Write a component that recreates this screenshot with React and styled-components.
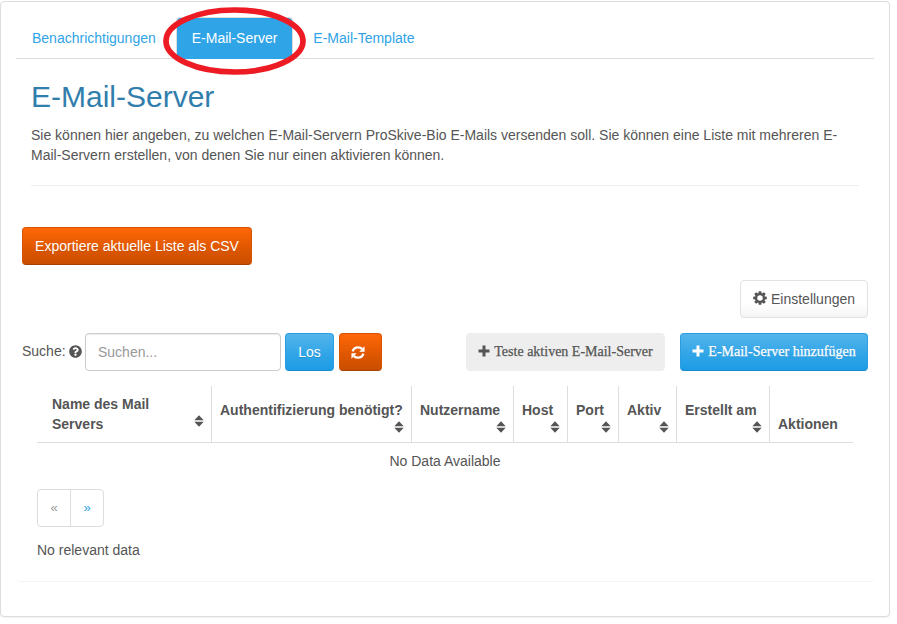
import React from "react";
import styled, { createGlobalStyle, css } from "styled-components";
import { FaQuestionCircle } from "react-icons/fa";

const GlobalStyle = createGlobalStyle`
  * { box-sizing: border-box; }
  body {
    margin: 0;
    background: #fff;
    color: #555;
    font: 14px/20px "Liberation Sans", Arial, sans-serif;
  }
  button, input { font: inherit; }
`;

const Page = styled.main`
  width: 890px;
  height: 616px;
  margin: 1px 0 6px;
  padding: 15px;
  border: 1px solid #ddd;
  border-radius: 4px;
  background: #fff;
  box-shadow: 0 1px 1px rgba(0, 0, 0, 0.05);
`;

const Tabs = styled.nav`
  display: flex;
  align-items: flex-end;
  gap: 2px;
  width: 858px;
  height: 42px;
  border-bottom: 1px solid #ddd;
`;

const Tab = styled.a`
  position: relative;
  height: 42px;
  margin-bottom: -1px;
  padding: 10px 15px;
  border: 1px solid transparent;
  border-radius: 4px 4px 0 0;
  color: #2fa4e7;
  white-space: nowrap;
  ${(p) => p.$active && css`
    margin-left: 2px;
    margin-right: 2px;
    border-color: #ddd #ddd transparent;
    background: #2fa4e7;
    background-clip: padding-box;
    color: #fff;
    border-bottom: 0;
  `}
`;

const Highlight = styled.svg`
  position: absolute;
  left: -15px;
  top: -12px;
  width: 144px;
  height: 70px;
  pointer-events: none;
`;

const Intro = styled.section`
  height: 127px;
  margin: 0 15px;
  border-bottom: 1px solid #eee;
`;

const Title = styled.h1`
  margin: 0;
  padding-top: 20px;
  color: #317eac;
  font-size: 30px;
  line-height: 35px;
  font-weight: 400;
`;

const Description = styled.p`
  margin: 11px 0 0;
`;

const ListPanel = styled.section`
  display: flex;
  flex-direction: column;
  height: 396px;
  width: 858px;
  padding: 41px 6px 0;
  border-bottom: 1px solid #f3f3f3;
  border-radius: 4px;
`;

const buttonKinds = {
  orange: css`
    background: linear-gradient(#ff6707, #dd5600 60%, #c94e00);
    border-color: #d65300;
    border-bottom-color: #a84100;
    color: #fff;
    text-shadow: 0 1px 0 rgba(0, 0, 0, 0.1);
  `,
  blue: css`
    background: linear-gradient(#54b4eb, #2fa4e7 60%, #1d9ce5);
    border-color: #2b9ee2;
    border-bottom-color: #178acc;
    color: #fff;
    text-shadow: 0 1px 0 rgba(0, 0, 0, 0.15);
  `,
  light: css`
    background: linear-gradient(#fff, #fff 60%, #f5f5f5);
    border-color: #e2e2e2;
    color: #555;
  `,
  gray: css`
    background: #eee;
    border-color: #eee;
    color: #555;
  `,
};

const Button = styled.button`
  display: inline-flex;
  align-items: center;
  justify-content: center;
  gap: 4px;
  flex: none;
  width: ${(p) => p.$width}px;
  height: 38px;
  padding: 0;
  border: 1px solid;
  border-radius: 4px;
  white-space: nowrap;
  ${(p) => buttonKinds[p.$kind]}
  ${(p) => p.$serif && css`
    font-family: "Liberation Serif", "Times New Roman", serif;
    -webkit-text-stroke: 0.25px currentColor;
  `}
`;

const RefreshButton = styled(Button)`
  justify-content: flex-start;
  padding-left: 11px;
`;

const SettingsRow = styled.div`
  display: flex;
  justify-content: flex-end;
  margin-top: 15px;
`;

const SearchRow = styled.div`
  display: flex;
  align-items: center;
  margin-top: 15px;
`;

const SearchLabel = styled.label`
  display: flex;
  align-items: center;
  justify-content: space-between;
  width: 60px;
  margin-right: 3px;
  padding-bottom: 2px;
`;

const SearchInput = styled.input`
  width: 196px;
  height: 38px;
  margin-right: 4px;
  padding: 8px 12px;
  border: 1px solid #ccc;
  border-radius: 4px;
  background: #fff;
  box-shadow: inset 0 1px 1px rgba(0, 0, 0, 0.075);
  outline: none;
  &::placeholder { color: #999; opacity: 1; }
`;

const SearchActions = styled.div`
  display: flex;
  gap: 5px;
`;

const ServerActions = styled.div`
  display: flex;
  gap: 15px;
  margin-left: auto;
`;

const Table = styled.table`
  width: 816px;
  margin: 15px 0 0 15px;
  border-collapse: separate;
  border-spacing: 0;
  table-layout: fixed;
`;

const HeaderCell = styled.th`
  height: 57px;
  width: ${(p) => p.$width}px;
  padding: ${(p) => (p.$first ? "8px 7px 8px 15px" : "14px 7px 7px 8px")};
  ${(p) => p.$last && css`padding-bottom: 8px;`}
  border-bottom: 1px solid #ddd;
  border-right: ${(p) => (p.$last ? 0 : 1)}px solid #ddd;
  text-align: left;
  vertical-align: ${(p) => (p.$last ? "bottom" : "top")};
  white-space: nowrap;
`;

const HeaderContent = styled.div`
  display: flex;
  flex-direction: ${(p) => (p.$first ? "row" : "column")};
  justify-content: space-between;
  align-items: flex-end;
`;

const HeaderText = styled.span`
  align-self: flex-start;
  width: ${(p) => (p.$wrap ? "110px" : "auto")};
  white-space: ${(p) => (p.$wrap ? "normal" : "nowrap")};
`;

const SortIcon = styled.svg`
  width: 10px;
  height: 12px;
  margin-top: 1px;
  margin-bottom: ${(p) => (p.$first ? 7 : 0)}px;
`;

const EmptyCell = styled.td`
  padding: 8px;
  text-align: center;
`;

const Pager = styled.nav`
  display: flex;
  width: 67px;
  height: 38px;
  margin: 10px 0 0 15px;
  border: 1px solid #ddd;
  border-radius: 4px;
`;

const PagerItem = styled.a`
  flex: 1;
  padding-top: 8px;
  font-size: 13px;
  text-align: center;
  color: ${(p) => (p.$disabled ? "#999" : "#2fa4e7")};
  & + & { border-left: 1px solid #ddd; }
`;

const Status = styled.p`
  margin: 13px 0 0 15px;
`;

const NudgedIcon = styled.svg`
  flex: none;
  margin-bottom: 2px;
`;

function GearIcon() {
  return (
    <NudgedIcon width="14" height="14" viewBox="0 0 14 14">
      <g fill="#555">
        {[0, 45, 90, 135].map((angle) => (
          <path
            key={angle}
            d="M5.7 0.2h2.6l.5 3H5.2zM5.2 10.8h3.6l-.5 3H5.7z"
            transform={`rotate(${angle} 7 7)`}
          />
        ))}
      </g>
      <circle cx="7" cy="7" r="3.8" fill="#fff" stroke="#555" strokeWidth="2.1" />
    </NudgedIcon>
  );
}

function PlusIcon() {
  return (
    <NudgedIcon width="12" height="12" viewBox="0 0 12 12">
      <path d="M4.5.5h3v4h4v3h-4v4h-3v-4h-4v-3h4z" fill="currentColor" />
    </NudgedIcon>
  );
}

function RefreshIcon() {
  return (
    <svg width="14" height="13" viewBox="0 0 13 12">
      <g fill="none" stroke="#fff" strokeWidth="2.2">
        <path d="M1.5 5C2.3 2.5 4.2 1.2 6.5 1.2c1.6 0 2.8.5 3.8 1.5" />
        <path d="M11.5 7c-.8 2.5-2.7 3.8-5 3.8-1.6 0-2.8-.5-3.8-1.5" />
      </g>
      <path d="M12.6.3v4.9H7.7zM.4 11.7V6.8h4.9z" fill="#fff" />
    </svg>
  );
}

const columns = [
  { label: "Name des Mail Servers", width: 175 },
  { label: "Authentifizierung benötigt?", width: 200 },
  { label: "Nutzername", width: 102 },
  { label: "Host", width: 54 },
  { label: "Port", width: 51 },
  { label: "Aktiv", width: 58 },
  { label: "Erstellt am", width: 93 },
  { label: "Aktionen", width: 83 },
];

export default function App() {
  return (
    <>
      <GlobalStyle />
      <Page>
        <Tabs>
          <Tab>Benachrichtigungen</Tab>
          <Tab $active>
            E-Mail-Server
            <Highlight viewBox="0 0 144 70">
              <ellipse cx="72.5" cy="35" rx="68.5" ry="31" fill="none" stroke="#ed1c24" strokeWidth="5.7" />
            </Highlight>
          </Tab>
          <Tab>E-Mail-Template</Tab>
        </Tabs>
        <Intro>
          <Title>E-Mail-Server</Title>
          <Description>
            Sie können hier angeben, zu welchen E-Mail-Servern ProSkive-Bio E-Mails versenden soll. Sie können eine Liste mit mehreren E-Mail-Servern erstellen, von denen Sie nur einen aktivieren können.
          </Description>
        </Intro>
        <ListPanel>
          <div>
            <Button $kind="orange" $width={230}>Exportiere aktuelle Liste als CSV</Button>
          </div>
          <SettingsRow>
            <Button $kind="light" $width={128}><GearIcon />Einstellungen</Button>
          </SettingsRow>
          <SearchRow>
            <SearchLabel>Suche: <FaQuestionCircle size={13} /></SearchLabel>
            <SearchInput placeholder="Suchen..." />
            <SearchActions>
              <Button $kind="blue" $width={49}>Los</Button>
              <RefreshButton $kind="orange" $width={43}><RefreshIcon /></RefreshButton>
            </SearchActions>
            <ServerActions>
              <Button $kind="gray" $width={199} $serif><PlusIcon />Teste aktiven E-Mail-Server</Button>
              <Button $kind="blue" $width={188} $serif><PlusIcon />E-Mail-Server hinzufügen</Button>
            </ServerActions>
          </SearchRow>
          <Table>
            <thead>
              <tr>
                {columns.map(({ label, width }, i) => {
                  const first = i === 0;
                  const last = i === columns.length - 1;
                  return (
                    <HeaderCell key={label} $width={width} $first={first} $last={last}>
                      <HeaderContent $first={first}>
                        <HeaderText $wrap={first}>{label}</HeaderText>
                        {!last && (
                          <SortIcon viewBox="0 0 10 12" $first={first}>
                            <path d="M.3 5.2 5 .3 9.7 5.2zM.3 6.8h9.4L5 11.7z" fill="#555" />
                          </SortIcon>
                        )}
                      </HeaderContent>
                    </HeaderCell>
                  );
                })}
              </tr>
            </thead>
            <tbody>
              <tr><EmptyCell colSpan={8}>No Data Available</EmptyCell></tr>
            </tbody>
          </Table>
          <Pager>
            <PagerItem $disabled>«</PagerItem>
            <PagerItem>»</PagerItem>
          </Pager>
          <Status>No relevant data</Status>
        </ListPanel>
      </Page>
    </>
  );
}
